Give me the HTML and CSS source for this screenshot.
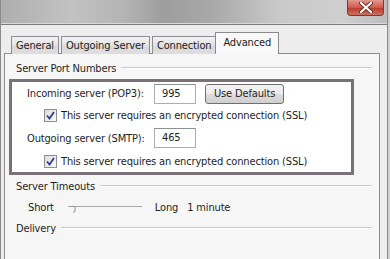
FILE: index.html
```html
<!DOCTYPE html>
<html lang="en">
<head>
<meta charset="UTF-8">
<title>Account Settings - Advanced</title>
<link rel="stylesheet" href="styles.css">
</head>
<body>
<div class="window">
    <div class="titlebar">
        <div class="close-btn">
            <svg width="16" height="11" viewBox="0 0 16 11">
                <path d="M3 1 L13 10 M13 1 L3 10" stroke="#6b2a22" stroke-width="4" stroke-linecap="round"/>
                <path d="M3 1 L13 10 M13 1 L3 10" stroke="#fff" stroke-width="2.2" stroke-linecap="round"/>
            </svg>
        </div>
    </div>

    <div class="dialog">
        <div class="tabs">
            <div class="tab">General</div>
            <div class="tab">Outgoing Server</div>
            <div class="tab">Connection</div>
            <div class="tab active">Advanced</div>
        </div>

        <div class="panel">
            <div class="group-title"><span>Server Port Numbers</span></div>

            <div class="highlight">
                <div class="row first">
                    <span class="label">Incoming server (POP3):</span>
                    <span class="field">995</span>
                    <span class="btn">Use Defaults</span>
                </div>
                <div class="check-row">
                    <span class="checkbox">
                        <svg width="9" height="9" viewBox="0 0 9 9"><path d="M1 4.5 L3.5 7.5 L8 1" fill="none" stroke="#2b3f8e" stroke-width="1.8"/></svg>
                    </span>
                    <span>This server requires an encrypted connection (SSL)</span>
                </div>
                <div class="row">
                    <span class="label">Outgoing server (SMTP):</span>
                    <span class="field">465</span>
                </div>
                <div class="check-row last">
                    <span class="checkbox">
                        <svg width="9" height="9" viewBox="0 0 9 9"><path d="M1 4.5 L3.5 7.5 L8 1" fill="none" stroke="#2b3f8e" stroke-width="1.8"/></svg>
                    </span>
                    <span>This server requires an encrypted connection (SSL)</span>
                </div>
            </div>

            <div class="group-title timeouts"><span>Server Timeouts</span></div>
            <div class="timeout-row">
                <span>Short</span>
                <span class="slider">
                    <svg width="74" height="10" viewBox="0 0 74 10">
                        <line x1="0" y1="3.5" x2="74" y2="3.5" stroke="#a9a9a9" stroke-width="1"/>
                        <path d="M3 3.5 H7 V8 Q7 9 6 9 H5" fill="none" stroke="#8e8e8e" stroke-width="1"/>
                    </svg>
                </span>
                <span class="long">Long</span>
                <span>1 minute</span>
            </div>

            <div class="group-title"><span>Delivery</span></div>
        </div>
    </div>
</div>
</body>
</html>
```

FILE: styles.css
```css
body {
    margin: 0;
    padding: 0;
    background-color: #cfcfcf;
    font-family: "DejaVu Sans Condensed", "Liberation Sans", sans-serif;
    font-size: 11px;
    letter-spacing: -0.15px;
    color: #1e1e1e;
}

.window {
    width: 388px;
    height: 259px;
    background-color: #eeedee;
    border-left: 1px solid #8b8b8b;
    border-right: 1px solid #8b8b8b;
    box-sizing: border-box;
    overflow: hidden;
}

.titlebar {
    height: 24px;
    display: flex;
    justify-content: flex-end;
    align-items: flex-start;
    padding-right: 3px;
    background: linear-gradient(90deg, #aeaeae 0%, #c2c2c2 18%, #b4b4b4 32%, #9e9e9e 42%, #a9a9a9 55%, #c9c9c9 72%, #cfcfcf 88%, #bdbdbd 100%);
    border-bottom: 1px solid #7d7d7d;
    box-shadow: inset 0 -1px 0 #d9d9d9;
}

.close-btn {
    width: 37px;
    height: 16px;
    display: flex;
    align-items: center;
    justify-content: center;
    background: linear-gradient(#e29a8f, #cf5a49 50%, #b8392a 51%, #d0705f);
    border: 1px solid #7a3a33;
    border-top: none;
    border-radius: 0 0 4px 4px;
    box-sizing: border-box;
}

.dialog {
    padding: 8px 0 0 3px;
}

.tabs {
    display: flex;
    align-items: flex-end;
    padding-left: 7px;
    height: 21px;
    position: relative;
    z-index: 1;
}

.tab {
    height: 17px;
    line-height: 17px;
    padding: 0 4px;
    margin-right: 2px;
    border: 1px solid #8d8d95;
    border-bottom: none;
    background: linear-gradient(#f3f3f3, #e3e3e3 50%, #d9d9d9 51%, #dedede);
    color: #222;
}

.tab.active {
    height: 21px;
    line-height: 19px;
    padding: 0 7px;
    margin-left: -3px;
    background: #f8f8f8;
    border-color: #8a8a8a;
}

.panel {
    height: 224px;
    width: 376px;
    margin-top: -1px;
    border: 1px solid #8d8d8d;
    background-color: #f6f6f6;
    box-sizing: border-box;
    padding: 7px 7px 0 4px;
}

.group-title {
    display: flex;
    align-items: center;
    height: 14px;
    padding-left: 7px;
    white-space: nowrap;
}

.group-title::after {
    content: "";
    flex: 1;
    border-top: 1px solid #c9c9c9;
    border-bottom: 1px solid #fff;
    margin-left: 5px;
}

.highlight {
    margin: 4px 18px 0 0;
    border: 3px solid #7a7077;
    background: #fff;
    padding: 1px 0 0 15px;
    height: 96px;
    box-sizing: border-box;
}

.row {
    display: flex;
    align-items: center;
    height: 22px;
    white-space: nowrap;
}

.row.first {
    height: 21px;
}

.label {
    width: 127px;
}

.field {
    width: 42px;
    height: 20px;
    line-height: 16px;
    box-sizing: border-box;
    border: 1px solid #abadb3;
    border-top-color: #8e9099;
    padding: 1px 0 0 7px;
    margin-right: 9px;
}

.btn {
    height: 20px;
    line-height: 18px;
    padding: 0 8px;
    box-sizing: border-box;
    border: 1px solid #707070;
    border-radius: 3px;
    background: linear-gradient(#f2f2f2, #ebebeb 50%, #dddddd 51%, #cfcfcf);
}

.check-row {
    display: flex;
    align-items: center;
    height: 23px;
    padding-left: 17px;
    white-space: nowrap;
}

.check-row.last {
    height: 24px;
}

.checkbox {
    width: 13px;
    height: 13px;
    box-sizing: border-box;
    border: 1px solid #8e8f8f;
    background: linear-gradient(135deg, #dcdcdc, #fafafa);
    display: flex;
    align-items: center;
    justify-content: center;
    margin-right: 4px;
}

.group-title.timeouts {
    margin-top: 4px;
}

.timeout-row {
    display: flex;
    align-items: center;
    height: 28px;
    padding-left: 19px;
    white-space: nowrap;
}

.slider {
    margin: 2px 13px 0 14px;
    display: flex;
}

.long {
    margin-right: 9px;
}
```
